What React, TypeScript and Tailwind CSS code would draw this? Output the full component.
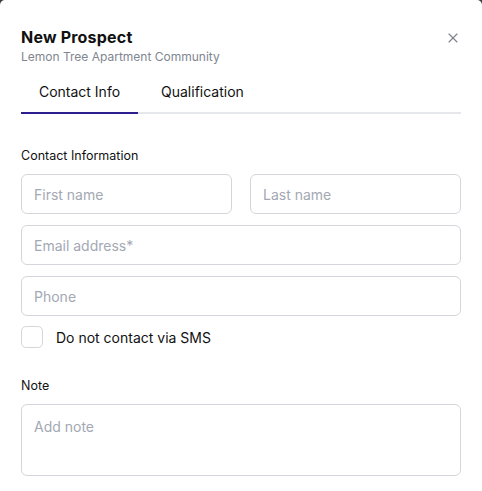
import { X } from 'lucide-react';

const inputCls =
	'h-10 w-full rounded-md border border-[#d4d6db] px-3 text-[14px] text-gray-900 placeholder:text-[#a3a8b3] outline-none';

const App = () => {
	return (
		<div className="min-h-[491px] w-[482px] bg-[#3a3d42] font-['Inter',sans-serif]">
			<div className="h-[491px] rounded-t-[5px] bg-white px-[21px] pt-[27px]">
				<div className="flex items-start justify-between">
					<div>
						<h1 className="text-[16px] font-bold leading-5 tracking-[0.2px] text-[#111]">New Prospect</h1>
						<p className="mt-[2px] text-[12px] leading-4 text-[#80868f]">Lemon Tree Apartment Community</p>
					</div>
					<button className="mt-[3px] text-[#7b818c]">
						<X size={16} strokeWidth={1.6} />
					</button>
				</div>

				<div className="mt-[8px] flex border-b-2 border-[#e6e7ea]">
					<div className="-mb-[2px] w-[117px] border-b-2 border-[#2d1f8f] pb-[10px] pt-[8px] text-center text-[14px] text-[#111]">
						Contact Info
					</div>
					<div className="pl-[23px] pb-[10px] pt-[8px] text-[14px] text-[#111]">Qualification</div>
				</div>

				<div className="mt-[34px] text-[12.5px] leading-4 text-[#111]">Contact Information</div>
				<div className="mt-[10px] flex gap-[18px]">
					<input className={inputCls} placeholder="First name" />
					<input className={inputCls} placeholder="Last name" />
				</div>
				<div className="mt-[11px]">
					<input className={inputCls} placeholder="Email address*" />
				</div>
				<div className="mt-[11px]">
					<input className={inputCls} placeholder="Phone" />
				</div>
				<label className="mt-[10px] flex items-center gap-[13px]">
					<span className="h-[22px] w-[22px] rounded-[5px] border border-[#d4d6db]" />
					<span className="text-[14px] text-[#111]">Do not contact via SMS</span>
				</label>

				<div className="mt-[30px] text-[12.5px] leading-4 text-[#111]">Note</div>
				<textarea
					className="mt-[10px] block h-[72px] w-full resize-none rounded-md border border-[#d4d6db] px-3 py-[12px] text-[14px] leading-5 placeholder:text-[#a3a8b3] outline-none"
					placeholder="Add note"
				/>
			</div>
		</div>
	);
};

export default App;
